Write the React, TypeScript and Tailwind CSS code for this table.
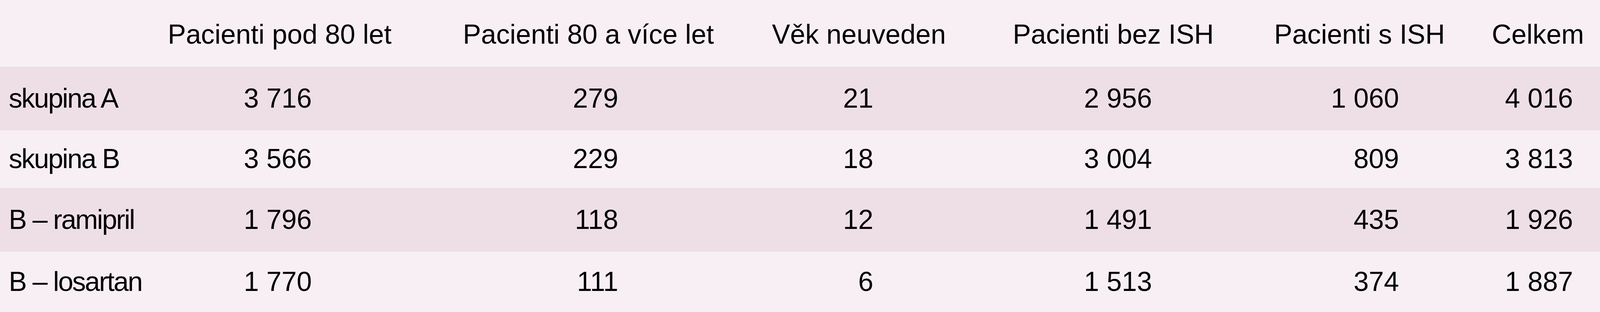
const font = "font-['Liberation_Sans',Arial,sans-serif]";

// column widths follow the reference proportions so the table spans the whole window
const columns = [
  { title: "Pacienti pod 80 let", w: "w-[17.027%]", hp: "pl-[0.71vw]", np: "pr-[7.315vw]" },
  { title: "Pacienti 80 a více let", w: "w-[19.707%]", hp: "pl-[2.13vw]", np: "pr-[7.867vw]" },
  { title: "Věk neuveden", w: "w-[14.189%]", hp: "pl-[1.74vw]", np: "pr-[6.117vw]" },
  { title: "Pacienti bez ISH", w: "w-[16.554%]", hp: "pl-[2.6vw]", np: "pr-[5.25vw]" },
  { title: "Pacienti s ISH", w: "w-[14.189%]", hp: "pl-[2.38vw]", np: "pr-[4.004vw]" },
  { title: "Celkem", w: "w-[8.561%]", hp: "pl-[1.8vw]", np: "pr-[1.687vw]" },
];

const rows = [
  { label: "skupina A", values: ["3 716", "279", "21", "2 956", "1 060", "4 016"], h: "h-[163px]", bg: "bg-[#eedfe6]" },
  { label: "skupina B", values: ["3 566", "229", "18", "3 004", "809", "3 813"], h: "h-[148px]", bg: "bg-[#f8eff4]" },
  { label: "B – ramipril", values: ["1 796", "118", "12", "1 491", "435", "1 926"], h: "h-[163px]", bg: "bg-[#eedfe6]" },
  { label: "B – losartan", values: ["1 770", "111", "6", "1 513", "374", "1 887"], h: "h-[155px]", bg: "bg-[#f8eff4]" },
];

export default function App() {
  return (
    <div className={`w-full h-[800px] bg-[#f8eff4] text-black text-[1.7vw] leading-none ${font}`}>
      {/* Header */}
      <div className="flex h-[171px] items-center pt-[7px]">
        <div className="w-[9.775%] shrink-0" />
        {columns.map((c) => (
          <div key={c.title} className={`${c.w} ${c.hp} shrink-0 whitespace-nowrap`}>
            {c.title}
          </div>
        ))}
      </div>

      {/* Rows */}
      {rows.map((r) => (
        <div key={r.label} className={`flex items-center ${r.h} ${r.bg}`}>
          <div className="w-[9.775%] shrink-0 pl-[0.55vw] tracking-[-0.037em] whitespace-nowrap">
            {r.label}
          </div>
          {r.values.map((v, i) => (
            <div
              key={i}
              className={`${columns[i].w} ${columns[i].np} shrink-0 text-right whitespace-nowrap`}
            >
              {v.replace(" ", "\u00a0")}
            </div>
          ))}
        </div>
      ))}
    </div>
  );
}
